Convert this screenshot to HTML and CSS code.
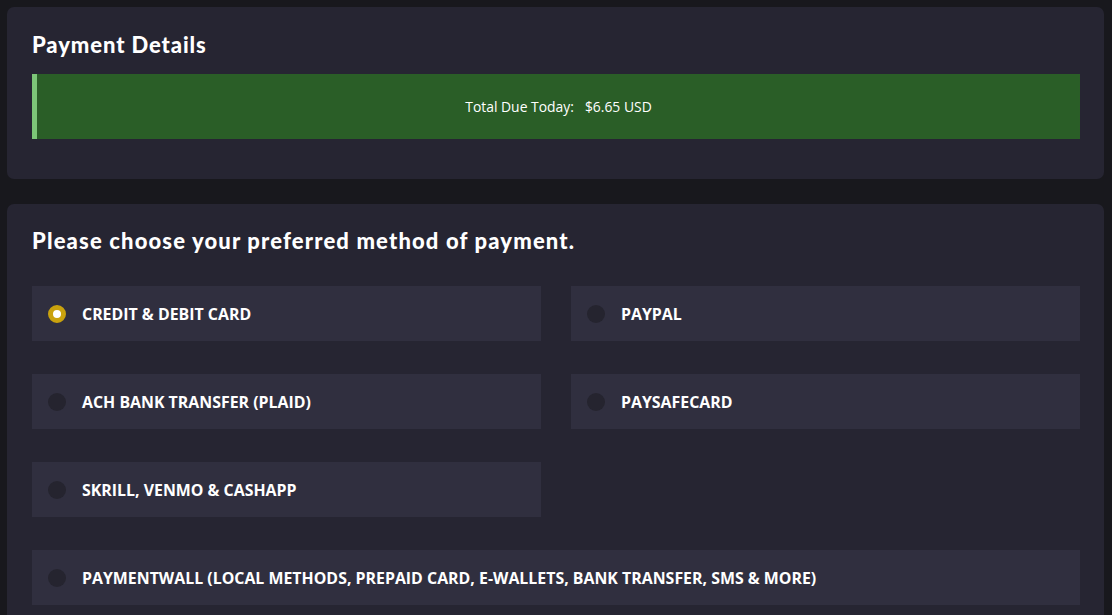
FILE: index.html
```html
<!DOCTYPE html>
<html lang="en">
<head>
<meta charset="utf-8">
<link rel="stylesheet" href="styles.css">
</head>
<body>
  <section class="card summary">
    <h2 class="card-title">Payment Details</h2>
    <div class="due-box">
      <span class="due-label">Total Due Today:</span>
      <span class="due-amount">$6.65 USD</span>
    </div>
  </section>
  <section class="card methods">
    <h2 class="card-title">Please choose your preferred method of payment.</h2>
    <div class="options">
      <label class="option selected"><span class="radio"></span><span class="opt-text">CREDIT &amp; DEBIT CARD</span></label>
      <label class="option"><span class="radio"></span><span class="opt-text">PAYPAL</span></label>
      <label class="option"><span class="radio"></span><span class="opt-text">ACH BANK TRANSFER (PLAID)</span></label>
      <label class="option"><span class="radio"></span><span class="opt-text">PAYSAFECARD</span></label>
      <label class="option"><span class="radio"></span><span class="opt-text">SKRILL, VENMO &amp; CASHAPP</span></label>
      <label class="option wide"><span class="radio"></span><span class="opt-text">PAYMENTWALL (LOCAL METHODS, PREPAID CARD, E-WALLETS, BANK TRANSFER, SMS &amp; MORE)</span></label>
    </div>
  </section>
</body>
</html>
```
FILE: styles.css
```css
* { box-sizing: border-box; }
html, body { height: 100%; }
body {
  margin: 0;
  padding: 7px 8px 0 7px;
  background: #18181d;
  font-family: "Open Sans", "Noto Sans", sans-serif;
  color: #fff;
  overflow: hidden;
}
.card {
  background: #262532;
  border-radius: 7px;
  padding: 25px 24px 40px 25px;
}
.card + .card { margin-top: 25px; }
.card-title {
  margin: 0;
  font-family: "Lato", sans-serif;
  font-weight: 900;
  font-size: 22px;
  line-height: 26px;
  letter-spacing: 1.15px;
}
.summary .card-title { margin-bottom: 16px; letter-spacing: 0.9px; }
.methods .card-title { margin-bottom: 32px; }
.methods { padding-top: 24px; }
.due-box {
  height: 65px;
  background: #2a5e27;
  border-left: 5px solid #7cc678;
  display: flex;
  align-items: center;
  justify-content: center;
  gap: 11px;
  font-size: 13.9px;
  padding-bottom: 1px;
}
.options {
  display: grid;
  grid-template-columns: 1fr 1fr;
  column-gap: 30px;
  row-gap: 33px;
}
.option {
  height: 55px;
  background: #302f3f;
  display: flex;
  align-items: center;
  padding-left: 16px;
  gap: 16px;
  cursor: pointer;
}
.option.wide { grid-column: 1 / 3; grid-row: 4; }
.radio {
  width: 18px;
  height: 18px;
  border-radius: 50%;
  background: #25242f;
  flex: none;
}
.option.selected .radio {
  background: #fff;
  border: 5px solid #c9a20e;
}
.opt-text {
  font-weight: 700;
  font-size: 15.9px;
}
```
